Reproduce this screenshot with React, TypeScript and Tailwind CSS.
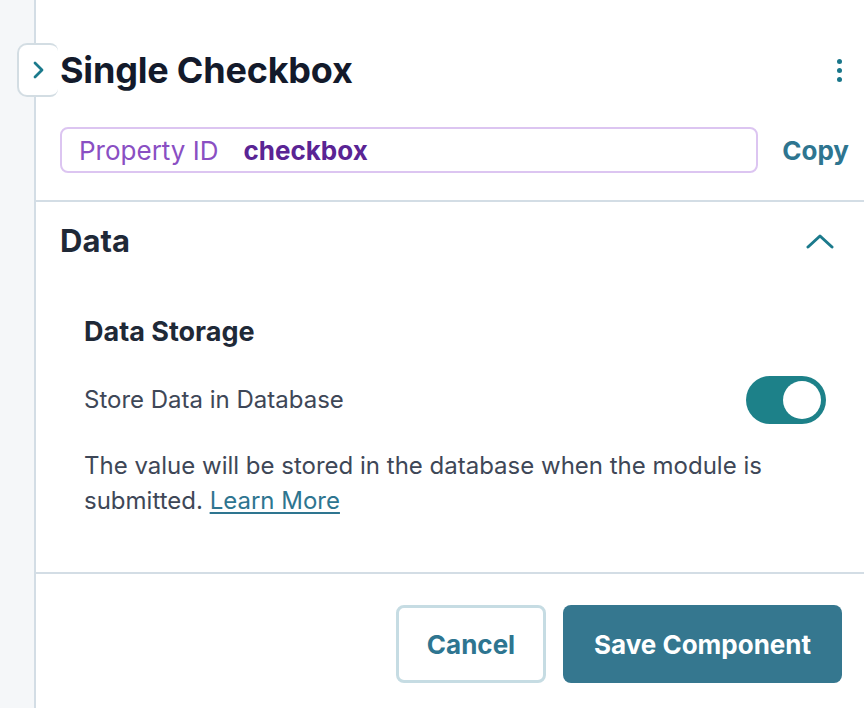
import React from "react";

const FONT = { fontFamily: "Inter, 'Noto Sans', sans-serif" };

function Toggle() {
  return (
    <div className="flex h-[48px] w-[80px] items-center justify-end rounded-full bg-[#1d8189] px-[5px]">
      <div className="h-[38px] w-[38px] rounded-full bg-white" />
    </div>
  );
}

export default function App() {
  return (
    <div className="flex h-[708px] w-full overflow-hidden bg-white" style={FONT}>
      {/* left rail */}
      <div className="w-[36px] shrink-0 border-r-2 border-[#d3dde5] bg-[#f5f7f9]" />

      <div className="relative flex flex-1 flex-col">
        {/* collapse tab */}
        <div className="absolute left-[-19px] top-[43px] flex h-[54px] w-[41px] items-center rounded-l-[10px] rounded-r-[8px] border-2 border-r-0 border-[#d3dde3] bg-white pl-[13px]">
          <svg width="13" height="20" viewBox="0 0 13 20" fill="none">
            <path d="M3 3 L10 10 L3 17" stroke="#1b7a8c" strokeWidth="2.8" strokeLinecap="round" strokeLinejoin="round" />
          </svg>
        </div>

        {/* header */}
        <div className="border-b-2 border-[#d3dde5] pb-[27px] pl-[24px] pr-[15px] pt-[48px]">
          <div className="flex items-center justify-between pr-[7px]">
            <h1 className="text-[36px] font-bold leading-[44px] tracking-[-0.2px] text-[#131a2b]">Single Checkbox</h1>
            <div className="flex flex-col items-center gap-[4px]">
              <span className="h-[5px] w-[5px] rounded-full bg-[#19768a]" />
              <span className="h-[5px] w-[5px] rounded-full bg-[#19768a]" />
              <span className="h-[5px] w-[5px] rounded-full bg-[#19768a]" />
            </div>
          </div>
          <div className="mt-[35px] flex items-center justify-between">
            <div className="flex h-[46px] w-[698px] items-center rounded-[8px] border-2 border-[#dcc5f1] px-[17px] text-[26px]">
              <span className="text-[#8a4fc3]">Property ID</span>
              <span className="ml-[25px] font-bold text-[#5a2494]">checkbox</span>
            </div>
            <span className="text-[26px] font-bold text-[#2e7590]">Copy</span>
          </div>
        </div>

        {/* data section */}
        <div className="border-b-2 border-[#d3dde5] pb-[54px] pl-[24px] pr-[30px] pt-[21px]">
          <div className="flex h-[36px] items-center justify-between">
            <h2 className="text-[31px] font-bold text-[#1f2937]">Data</h2>
            <svg width="28" height="16" viewBox="0 0 28 16" fill="none">
              <path d="M2 14 L14 3 L26 14" stroke="#1b7a8c" strokeWidth="3" strokeLinecap="round" strokeLinejoin="round" />
            </svg>
          </div>

          <div className="pl-[24px] pr-[8px]">
            <h3 className="mt-[57px] text-[27px] font-bold leading-[32px] text-[#1f2937]">Data Storage</h3>
            <div className="mt-[28px] flex items-center justify-between">
              <span className="text-[24px] text-[#3e4757]">Store Data in Database</span>
              <Toggle />
            </div>
            <p className="mt-[24px] text-[24px] leading-[35px] text-[#3e4757]">
              The value will be stored in the database when the module is
              <br />
              submitted.{" "}
              <a className="text-[#2e7590] underline underline-offset-[3px]">Learn More</a>
            </p>
          </div>
        </div>

        {/* footer */}
        <div className="flex justify-end gap-[17px] pr-[22px] pt-[31px]">
          <button className="h-[78px] w-[150px] rounded-[8px] border-[3px] border-[#c6dce3] bg-white text-[26px] font-bold text-[#2e7590]">
            Cancel
          </button>
          <button className="h-[78px] w-[279px] rounded-[8px] bg-[#35778f] text-[26px] font-bold text-white">
            Save Component
          </button>
        </div>
      </div>
    </div>
  );
}
